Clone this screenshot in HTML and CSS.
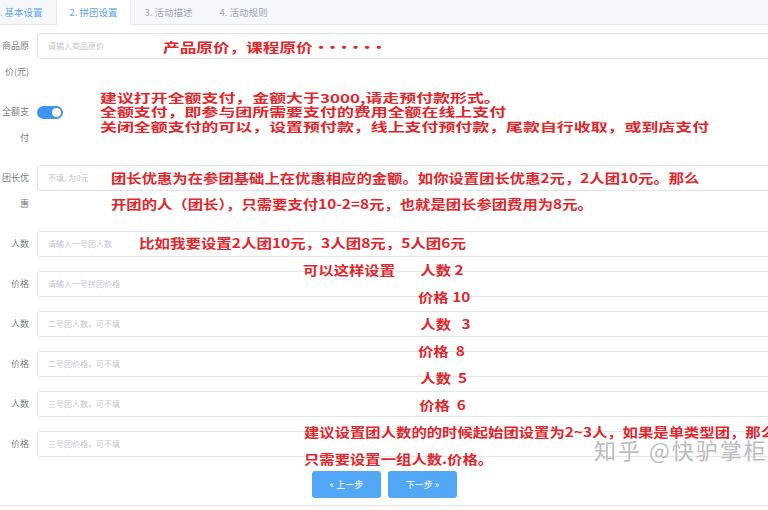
FILE: index.html
```html
<!DOCTYPE html>
<html lang="zh-CN">
<head>
<meta charset="utf-8">
<title>拼团设置</title>
<link rel="stylesheet" href="styles.css">
</head>
<body>
<div class="page">
  <div class="tabs">
    <div class="tab done">1. 基本设置</div>
    <div class="tab active">2. 拼团设置</div>
    <div class="tab">3. 活动描述</div>
    <div class="tab">4. 活动规则</div>
  </div>

  <div class="form">
    <div class="row">
      <div class="label">商品原价(元)</div>
      <div class="field"><div class="input">请输入商品原价</div></div>
    </div>
    <div class="row">
      <div class="label">全额支付</div>
      <div class="field"><div class="switch"><span class="knob"></span></div></div>
    </div>
    <div class="row">
      <div class="label">团长优惠</div>
      <div class="field"><div class="input">不填, 为0元</div></div>
    </div>
    <div class="row">
      <div class="label">人数</div>
      <div class="field"><div class="input">请输入一号团人数</div></div>
    </div>
    <div class="row">
      <div class="label">价格</div>
      <div class="field"><div class="input">请输入一号拼团价格</div></div>
    </div>
    <div class="row">
      <div class="label">人数</div>
      <div class="field"><div class="input">二号团人数，可不填</div></div>
    </div>
    <div class="row">
      <div class="label">价格</div>
      <div class="field"><div class="input">二号团价格，可不填</div></div>
    </div>
    <div class="row">
      <div class="label">人数</div>
      <div class="field"><div class="input">三号团人数，可不填</div></div>
    </div>
    <div class="row">
      <div class="label">价格</div>
      <div class="field"><div class="input">三号团价格，可不填</div></div>
    </div>
    <div class="actions">
      <div class="btn">« 上一步</div>
      <div class="btn">下一步 »</div>
    </div>
  </div>
  <div class="footer-line"></div>

  <div class="note n1">产品原价，课程原价<span class="dots">······</span></div>
  <div class="note n2">建议打开全额支付，金额大于3000,请走预付款形式。<br>全额支付，即参与团所需要支付的费用全额在线上支付<br>关闭全额支付的可以，设置预付款，线上支付预付款，尾款自行收取，或到店支付</div>
  <div class="note n3">团长优惠为在参团基础上在优惠相应的金额。如你设置团长优惠2元，2人团10元。那么<br>开团的人（团长），只需要支付10-2=8元，也就是团长参团费用为8元。</div>
  <div class="note n4">比如我要设置2人团10元，3人团8元，5人团6元</div>
  <div class="note n5">可以这样设置</div>
  <div class="note n6">
    <div class="l1">人数 2</div>
    <div>价格 10</div>
    <div class="l1">人数   3</div>
    <div>价格  8</div>
    <div class="l1">人数  5</div>
    <div class="l2">价格  6</div>
  </div>
  <div class="note n7">建议设置团人数的的时候起始团设置为2~3人，如果是单类型团，那么<br>只需要设置一组人数.价格。</div>

  <div class="watermark">知乎 @快驴掌柜</div>
</div>
</body>
</html>
```

FILE: styles.css
```css
* { box-sizing: border-box; }
html, body { margin: 0; padding: 0; background: #fff; }
body { font-family: "Noto Sans CJK SC", "Noto Sans", sans-serif; }

.page {
  position: relative;
  width: 768px;
  height: 510px;
  overflow: hidden;
  background: #fff;
}

.tabs {
  display: flex;
  height: 25px;
  margin-left: -19px;
  background: #f5f7fa;
  border-bottom: 1px solid #e6e9ee;
}
.tab {
  width: 75px;
  text-align: center;
  font-size: 9.5px;
  line-height: 24px;
  color: #a4a8b0;
}
.tab.done { color: #62a8ec; }
.tab.active {
  background: #fff;
  color: #62a8ec;
  border-left: 1px solid #e6e9ee;
  border-right: 1px solid #e6e9ee;
  height: 25px;
}

.form { padding: 8px 0 0 1px; }
.row { display: flex; margin-bottom: 14px; }
.label {
  width: 28px;
  font-size: 9px;
  line-height: 26px;
  text-align: right;
  color: #7a7d82;
}
.field { flex: 1; margin-left: 8px; margin-right: -20px; }
.input {
  height: 26px;
  border: 1px solid #e2e5ea;
  border-radius: 3px;
  padding: 0 10px;
  font-size: 8px;
  line-height: 24px;
  color: #c3c6cc;
}
.switch {
  position: relative;
  width: 26px;
  height: 13px;
  margin-top: 6.5px;
  border-radius: 7px;
  background: #3f94f2;
}
.knob {
  position: absolute;
  right: 2px;
  top: 2px;
  width: 9px;
  height: 9px;
  border-radius: 50%;
  background: #fff;
}

.actions {
  display: flex;
  justify-content: center;
  gap: 7px;
  margin-top: 2px;
}
.btn {
  width: 69px;
  height: 27px;
  border-radius: 3px;
  background: #52a6f6;
  color: #fff;
  font-size: 9px;
  line-height: 27px;
  text-align: center;
}
.footer-line {
  margin-top: 7px;
  border-top: 1px solid #e6e6e6;
}

.note {
  position: absolute;
  color: #e1262c;
  font-weight: 700;
  font-size: 13px;
  line-height: 27px;
  white-space: nowrap;
  transform-origin: 0 0;
  transform: scaleX(1.18);
}
.n1 { left: 163px; top: 32.5px; transform: scaleX(1.28); }
.dots { letter-spacing: -4px; margin-left: 0; }
.n2 { left: 100px; top: 90.75px; font-size: 12px; line-height: 14.5px; transform: scaleX(1.41); }
.n3 { left: 111px; top: 165px; line-height: 26px; }
.n4 { left: 139px; top: 228.5px; transform: scaleX(1.19); }
.n5 { left: 303px; top: 255.5px; }
.n6 { left: 418px; top: 255.5px; }
.n6 div { white-space: pre; }
.n6 .l1 { padding-left: 2px; }
.n6 .l2 { padding-left: 1px; }
.n7 { left: 304px; top: 417.5px; }

.watermark {
  position: absolute;
  left: 594px;
  top: 434px;
  font-size: 22px;
  line-height: 30px;
  color: #bcbcbc;
  white-space: nowrap;
  letter-spacing: 2px;
}
```
